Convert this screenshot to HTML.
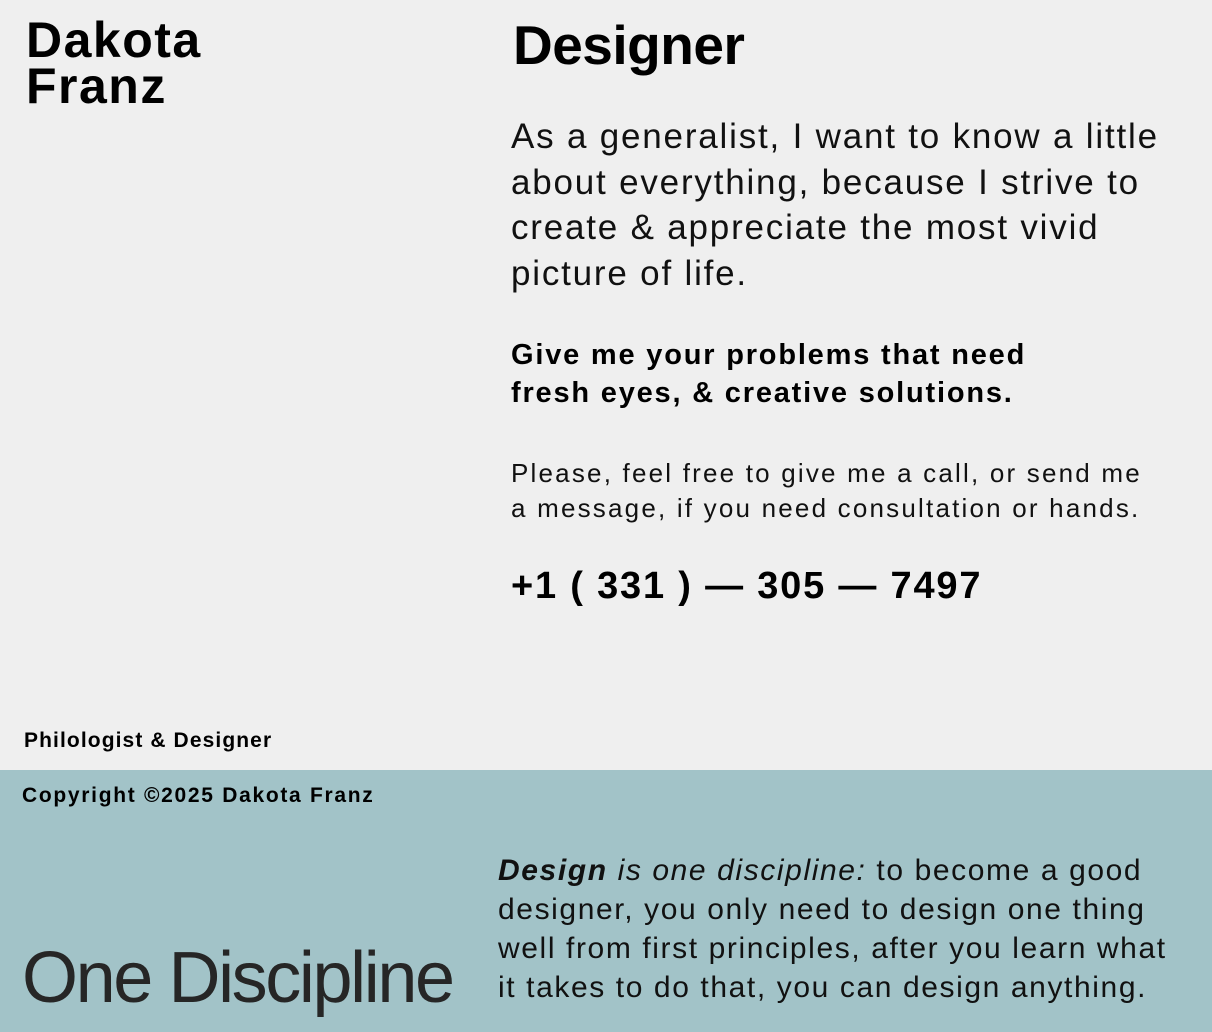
<!DOCTYPE html>
<html><head><meta charset="utf-8"><style>
*{margin:0;padding:0;box-sizing:border-box}
body{width:1212px;height:1032px;background:#efefef;font-family:"Liberation Sans",Arial,sans-serif;color:#000;position:relative;overflow:hidden}
.a{position:absolute;white-space:nowrap}
#foot{position:absolute;left:0;top:770px;width:1212px;height:262px;background:#a2c3c8}
</style></head><body>
<div class="a" style="left:26px;top:17px;font-size:50px;font-weight:bold;line-height:46px;letter-spacing:1.5px">Dakota<br>Franz</div>
<div class="a" style="left:513px;top:13px;font-size:55px;font-weight:bold;line-height:64px;letter-spacing:-0.5px">Designer</div>
<div class="a" style="left:511px;top:114px;font-size:35px;line-height:45.5px;font-weight:300;color:#111;letter-spacing:1.8px">As a generalist, I want to know a little<br>about everything, because I strive to<br>create &amp; appreciate the most vivid<br>picture of life.</div>
<div class="a" style="left:511px;top:336px;font-size:29px;line-height:38px;font-weight:bold;letter-spacing:1.8px">Give me your problems that need<br>fresh eyes, &amp; creative solutions.</div>
<div class="a" style="left:511px;top:456px;font-size:26px;line-height:35px;color:#111;letter-spacing:2.2px">Please, feel free to give me a call, or send me<br>a message, if you need consultation or hands.</div>
<div class="a" style="left:511px;top:563px;font-size:38px;line-height:46px;font-weight:bold;letter-spacing:1.8px">+1 ( 331 ) — 305 — 7497</div>
<div class="a" style="left:24px;top:728px;font-size:21px;line-height:26px;font-weight:bold;letter-spacing:1.1px">Philologist &amp; Designer</div>
<div id="foot"></div>
<div class="a" style="left:22px;top:783px;font-size:21px;line-height:26px;font-weight:bold;letter-spacing:1.7px">Copyright ©2025 Dakota Franz</div>
<div class="a" style="left:22px;top:936px;font-size:72px;line-height:84px;color:#262626;letter-spacing:-2.4px">One Discipline</div>
<div class="a" style="left:498px;top:851px;font-size:30px;line-height:39px;color:#111;letter-spacing:1.6px"><b><i>Design</i></b> <i>is one discipline:</i> to become a good<br>designer, you only need to design one thing<br>well from first principles, after you learn what<br>it takes to do that, you can design anything.</div>
</body></html>
